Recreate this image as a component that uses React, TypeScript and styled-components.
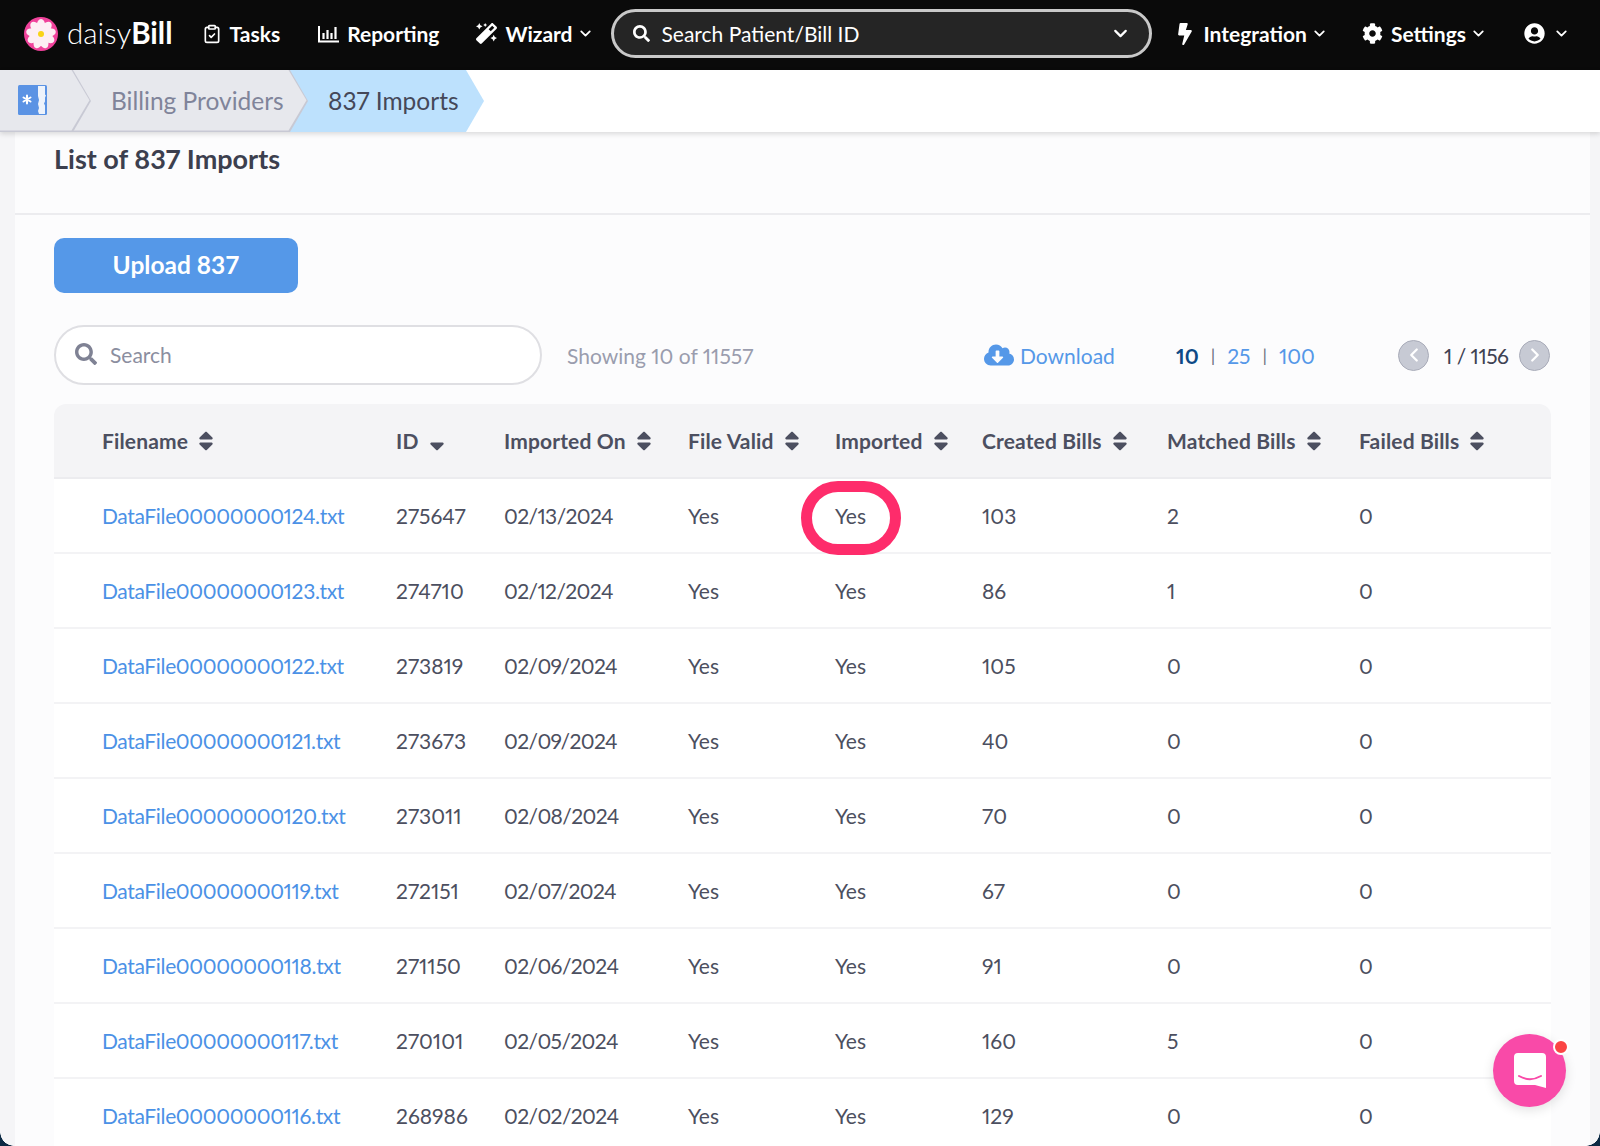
import React from 'react'
import styled, { createGlobalStyle } from 'styled-components'
import { ChevronDown, ChevronLeft, ChevronRight, ClipboardCheck } from 'lucide-react'
import { FaBolt, FaCloudDownloadAlt, FaCog, FaMagic, FaSearch, FaSort, FaSortDown, FaUserCircle } from 'react-icons/fa'

interface ImportRow {
    file: string,
    id: string,
    date: string,
    created: string,
    matched: string
}

const rows: ImportRow[] = [
    { file: 'DataFile00000000124.txt', id: '275647', date: '02/13/2024', created: '103', matched: '2' },
    { file: 'DataFile00000000123.txt', id: '274710', date: '02/12/2024', created: '86', matched: '1' },
    { file: 'DataFile00000000122.txt', id: '273819', date: '02/09/2024', created: '105', matched: '0' },
    { file: 'DataFile00000000121.txt', id: '273673', date: '02/09/2024', created: '40', matched: '0' },
    { file: 'DataFile00000000120.txt', id: '273011', date: '02/08/2024', created: '70', matched: '0' },
    { file: 'DataFile00000000119.txt', id: '272151', date: '02/07/2024', created: '67', matched: '0' },
    { file: 'DataFile00000000118.txt', id: '271150', date: '02/06/2024', created: '91', matched: '0' },
    { file: 'DataFile00000000117.txt', id: '270101', date: '02/05/2024', created: '160', matched: '5' },
    { file: 'DataFile00000000116.txt', id: '268986', date: '02/02/2024', created: '129', matched: '0' }
]

const columns = ['Filename', 'ID', 'Imported On', 'File Valid', 'Imported', 'Created Bills', 'Matched Bills', 'Failed Bills']

const Logo = () => (
    <svg width="34" height="34" viewBox="0 0 34 34">
        <circle cx="17" cy="17" r="17" fill="#f0429b" />
        {[0, 40, 80, 120, 160, 200, 240, 280, 320].map(a => (
            <ellipse key={a} cx="17" cy="8.8" rx="4.3" ry="6.8" fill="#fdeef4" transform={`rotate(${a} 17 17)`} />
        ))}
        <circle cx="17" cy="17" r="3" fill="#f9d417" />
    </svg>
)

const ProviderIcon = () => (
    <svg width="29" height="30" viewBox="0 0 29 30">
        <rect width="29" height="30" rx="1.5" fill="#5b93e4" />
        <path d="M20 1h7v8.500l1 1-1 2v4l-1 2 1 2v8.500h-6l-1-3 1-3-1-4 1-4-1-4z" fill="#eef3fb" />
        <path d="M9 10.500v8M5.500 12.500l7 4M12.500 12.500l-7 4" stroke="#fff" strokeWidth="2" strokeLinecap="round" />
    </svg>
)

const ReportIcon = () => (
    <svg width="21" height="18" viewBox="0 0 21 18">
        <path d="M1 1v15.500h20" fill="none" stroke="#fff" strokeWidth="2" />
        <path d="M5.500 8v6M9.500 5v9M13.500 8v6M17.500 2v12" fill="none" stroke="#fff" strokeWidth="2.200" />
    </svg>
)

const ChatIcon = () => (
    <svg width="34" height="37" viewBox="0 0 34 37">
        <path d="M5 1h24a4 4 0 0 1 4 4v31l-11-3H5a4 4 0 0 1-4-4V5a4 4 0 0 1 4-4z" fill="#fff" />
        <path d="M6 24c7 4 15 4 22 0" fill="none" stroke="#f94aa8" strokeWidth="2" strokeLinecap="round" />
    </svg>
)

const App: React.FC = () => {
    return (
        <Page>
            <GlobalStyle />
            <Header>
                <LogoBlock>
                    <Logo />
                    <Wordmark>daisy<b>Bill</b></Wordmark>
                </LogoBlock>
                <NavItem $left={29}><ClipboardCheck size={20} strokeWidth={2} />Tasks</NavItem>
                <NavItem $left={38}><ReportIcon />Reporting</NavItem>
                <NavItem $left={37}><FaMagic size={21} />Wizard<NavChevron size={17} strokeWidth={2.5} /></NavItem>
                <PatientSearch>
                    <FaSearch size={17} />
                    <span>Search Patient/Bill ID</span>
                    <ChevronDown size={21} strokeWidth={2.5} />
                </PatientSearch>
                <NavItem $left={22}><FaBolt size={22} />Integration<NavChevron size={17} strokeWidth={2.5} /></NavItem>
                <NavItem $left={34}><FaCog size={21} />Settings<NavChevron size={17} strokeWidth={2.5} /></NavItem>
                <NavItem $left={37}><FaUserCircle size={21} /><ChevronDown size={17} strokeWidth={2.5} /></NavItem>
            </Header>

            <Breadcrumbs>
                <Crumb $width={91} $z={3} $active={false}><ProviderIcon /></Crumb>
                <Crumb $width={235} $z={2} $active={false}>Billing Providers</Crumb>
                <Crumb $width={194} $z={1} $active>837 Imports</Crumb>
            </Breadcrumbs>

            <Panel>
                <PanelTitle>List of 837 Imports</PanelTitle>
                <PanelBody>
                    <UploadButton>Upload 837</UploadButton>
                    <Toolbar>
                        <SearchBox>
                            <FaSearch size={22} />
                            <span>Search</span>
                        </SearchBox>
                        <Showing>Showing 10 of 11557</Showing>
                        <DownloadLink><FaCloudDownloadAlt size={30} />Download</DownloadLink>
                        <PageSizes>
                            <SizeLink $current>10</SizeLink>
                            <Pipe>|</Pipe>
                            <SizeLink>25</SizeLink>
                            <Pipe>|</Pipe>
                            <SizeLink>100</SizeLink>
                        </PageSizes>
                        <Pager>
                            <PagerButton><ChevronLeft size={22} strokeWidth={2.5} /></PagerButton>
                            <PageCount>1 / 1156</PageCount>
                            <PagerButton><ChevronRight size={22} strokeWidth={2.5} /></PagerButton>
                        </Pager>
                    </Toolbar>
                    <TableHead>
                        {columns.map(c => (
                            <HeadCell key={c}>
                                {c}
                                {c === 'ID' ? <FaSortDown size={24} /> : <FaSort size={24} />}
                            </HeadCell>
                        ))}
                    </TableHead>
                    {rows.map((r, i) => (
                        <TableRow key={r.id}>
                            <FileLink>{r.file}</FileLink>
                            <Cell>{r.id}</Cell>
                            <DateCell>{r.date}</DateCell>
                            <Cell>Yes</Cell>
                            <Cell>Yes{i === 0 && <Highlight />}</Cell>
                            <Cell>{r.created}</Cell>
                            <Cell>{r.matched}</Cell>
                            <Cell>0</Cell>
                        </TableRow>
                    ))}
                </PanelBody>
            </Panel>

            <ChatBubble>
                <ChatIcon />
                <ChatDot />
            </ChatBubble>
            <WindowCorner $side="left" />
            <WindowCorner $side="right" />
        </Page>
    )
}

const GlobalStyle = createGlobalStyle`
    html, body {
        margin: 0;
        padding: 0;
        background: #f5f5f7;
    }
    body {
        font-family: 'Lato', 'Liberation Sans', sans-serif;
        font-variant-numeric: proportional-nums;
    }
`

const Page = styled.div`
    position: relative;
    width: 1600px;
    height: 1146px;
    overflow: hidden;
    background: #f5f5f7;
    color: #4c4f60;
    font-size: 21px;
`

const Header = styled.header`
    display: flex;
    align-items: center;
    height: 70px;
    padding: 0 0 3px 24px;
    background: #0a0a0a;
    color: #fff;
    box-sizing: border-box;
`

const LogoBlock = styled.div`
    display: flex;
    align-items: center;
    gap: 9px;
`

const Wordmark = styled.div`
    font-size: 29.500px;
    font-weight: 300;
    margin-top: -2px;
    b {
        font-weight: 700;
    }
`

const NavItem = styled.div<{ $left: number }>`
    display: flex;
    align-items: center;
    gap: 8px;
    margin-left: ${p => p.$left}px;
    font-size: 21px;
    font-weight: 700;
    white-space: nowrap;
`

const NavChevron = styled(ChevronDown)`
    margin-left: -4px;
`

const PatientSearch = styled.div`
    display: flex;
    align-items: center;
    width: 541px;
    height: 49px;
    margin-left: 17px;
    padding: 0 18px 0 19px;
    box-sizing: border-box;
    background: #252525;
    border: 3px solid #c9c9c9;
    border-radius: 25px;
    font-size: 21px;
    span {
        flex: 1;
        margin-left: 12px;
    }
`

const Breadcrumbs = styled.nav`
    position: relative;
    z-index: 2;
    display: flex;
    height: 62px;
    background: #fff;
    box-shadow: 0 2px 5px rgba(0, 0, 0, 0.14);
`

const Crumb = styled.div<{ $width: number, $z: number, $active: boolean }>`
    position: relative;
    z-index: ${p => p.$z};
    display: flex;
    align-items: center;
    box-sizing: border-box;
    width: ${p => p.$width}px;
    margin-left: ${p => (p.$z === 3 ? 0 : -18)}px;
    padding: 0 0 2px ${p => (p.$z === 3 ? 18 : 38)}px;
    font-size: 24.500px;
    color: ${p => (p.$active ? '#454859' : '#80849a')};
    background: ${p => (p.$active ? '#bde1fd' : '#c8c9d4')};
    clip-path: polygon(0 0, calc(100% - 18px) 0, 100% 50%, calc(100% - 18px) 100%, 0 100%);
    &::before {
        content: '';
        position: absolute;
        inset: 0 1.5px 1.5px -1.5px;
        z-index: -1;
        background: ${p => (p.$active ? '#bde1fd' : '#e7e8ed')};
        clip-path: polygon(0 0, calc(100% - 18px) 0, 100% 50%, calc(100% - 18px) 100%, 0 100%);
    }
`

const Panel = styled.main`
    margin: 0 10px 0 15px;
    background: #fcfcfd;
`

const PanelTitle = styled.h2`
    margin: 0;
    height: 83px;
    padding: 10px 0 0 39px;
    box-sizing: border-box;
    font-size: 27px;
    line-height: 34px;
    font-weight: 700;
    color: #3c3f4e;
    border-bottom: 2px solid #ececef;
`

const PanelBody = styled.div`
    padding: 23px 39px 0;
`

const UploadButton = styled.button`
    display: block;
    width: 244px;
    height: 55px;
    padding: 0 0 3px;
    border: 0;
    border-radius: 10px;
    background: #5598e8;
    color: #fff;
    font-family: inherit;
    font-size: 24.500px;
    font-weight: 700;
`

const Toolbar = styled.div`
    display: flex;
    align-items: center;
    height: 60px;
    margin-top: 32px;
    margin-bottom: 19px;
    white-space: nowrap;
    & > * {
        flex-shrink: 0;
    }
`

const SearchBox = styled.div`
    display: flex;
    align-items: center;
    gap: 13px;
    width: 488px;
    height: 60px;
    padding: 0 0 2px 19px;
    box-sizing: border-box;
    background: #fff;
    border: 2px solid #dfdfe3;
    border-radius: 30px;
    color: #8b8e9f;
    font-size: 21px;
    svg {
        color: #7f8294;
    }
`

const Showing = styled.div`
    margin-left: 25px;
    width: 417px;
    color: #9a9dae;
    font-size: 21px;
`

const DownloadLink = styled.div`
    display: flex;
    align-items: center;
    gap: 6px;
    width: 192px;
    color: #5598e8;
    font-size: 21px;
`

const PageSizes = styled.div`
    display: flex;
    align-items: center;
    gap: 12px;
    width: 222px;
`

const SizeLink = styled.span<{ $current?: boolean }>`
    color: ${p => (p.$current ? '#0e4a86' : '#5598e8')};
    font-weight: ${p => (p.$current ? 700 : 400)};
    font-size: 21px;
`

const Pipe = styled.span`
    color: #6d7080;
    font-size: 18px;
`

const Pager = styled.div`
    display: flex;
    align-items: center;
    gap: 11px;
    color: #3f4252;
    font-size: 21px;
`

const PageCount = styled.span`
    margin-left: 4px;
    letter-spacing: -0.5px;
`

const PagerButton = styled.div`
    display: flex;
    align-items: center;
    justify-content: center;
    width: 31px;
    height: 31px;
    box-sizing: border-box;
    border-radius: 50%;
    background: #c7cad4;
    border: 1px solid #a9acb9;
    color: #fff;
`

const gridColumns = '342px 108px 184px 147px 147px 185px 192px 192px'

const TableHead = styled.div`
    display: grid;
    grid-template-columns: ${gridColumns};
    height: 75px;
    align-items: center;
    background: #f4f4f6;
    border-radius: 12px 12px 0 0;
    border-bottom: 2px solid #ececef;
    box-sizing: border-box;
`

const HeadCell = styled.div`
    display: flex;
    align-items: center;
    gap: 6px;
    font-weight: 700;
    font-size: 21px;
    letter-spacing: 0.15px;
    color: #4c4f60;
    white-space: nowrap;
    &:first-child {
        padding-left: 48px;
    }
`

const TableRow = styled.div`
    display: grid;
    grid-template-columns: ${gridColumns};
    height: 75px;
    align-items: center;
    box-sizing: border-box;
    background: #fff;
    border-bottom: 2px solid #f3f3f5;
`

const Cell = styled.div`
    position: relative;
    font-size: 21px;
    color: #4c4f60;
`

const DateCell = styled(Cell)`
    letter-spacing: -0.6px;
`

const FileLink = styled.div`
    padding-left: 48px;
    font-size: 21px;
    letter-spacing: -0.35px;
    color: #4b91e6;
`

const Highlight = styled.div`
    position: absolute;
    left: -34px;
    top: calc(50% - 35px);
    width: 100px;
    height: 74px;
    box-sizing: border-box;
    border: 11px solid #fe2c6b;
    border-radius: 37px;
`

const ChatBubble = styled.div`
    position: absolute;
    left: 1493px;
    top: 1034px;
    display: flex;
    align-items: center;
    justify-content: center;
    width: 73px;
    height: 73px;
    border-radius: 50%;
    background: #f94aa8;
    box-shadow: 0 3px 12px rgba(0, 0, 0, 0.12);
`

const ChatDot = styled.div`
    position: absolute;
    right: -3px;
    top: 5px;
    width: 12px;
    height: 12px;
    border: 2px solid #fff;
    border-radius: 50%;
    background: #fb4444;
`

const WindowCorner = styled.div<{ $side: 'left' | 'right' }>`
    position: absolute;
    bottom: 0;
    ${p => p.$side}: 0;
    width: 14px;
    height: 14px;
    background: radial-gradient(circle at ${p => (p.$side === 'left' ? '100% 0' : '0 0')}, transparent 13.500px, #0c2a44 14px);
`

export default App
